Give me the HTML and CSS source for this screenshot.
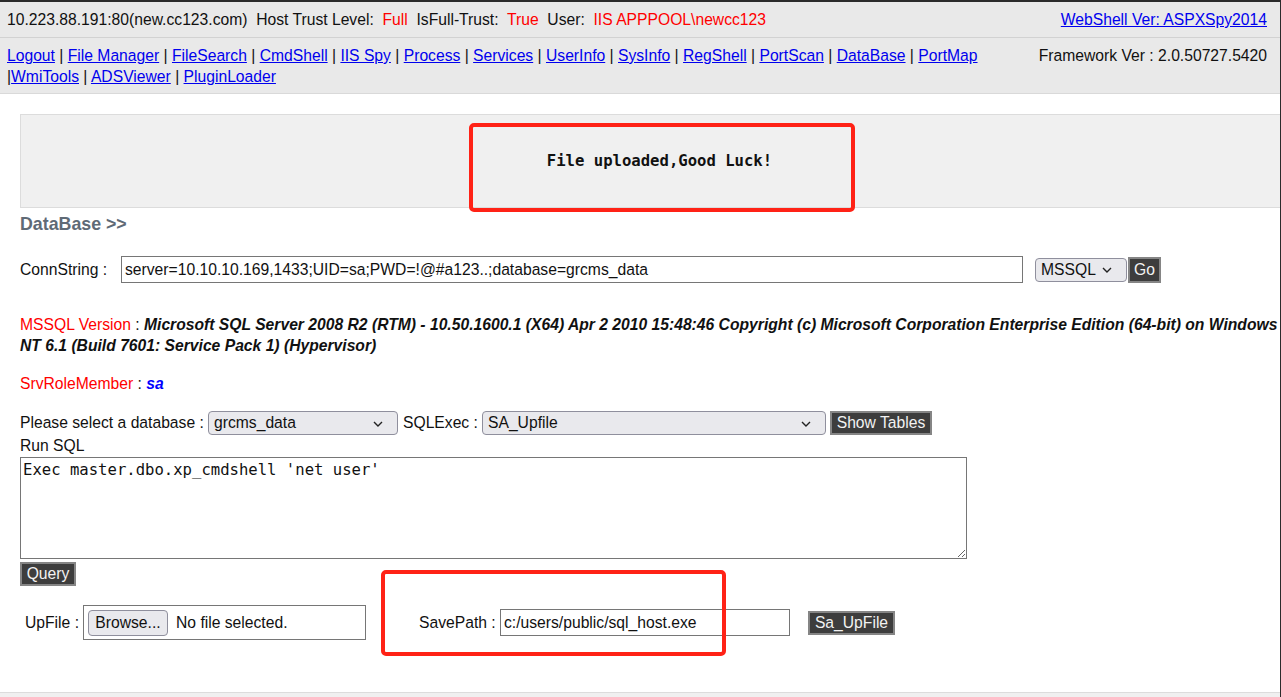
FILE: index.html
```html
<!DOCTYPE html>
<html>
<head>
<meta charset="utf-8">
<link rel="stylesheet" href="styles.css">
</head>
<body>
<div class="page">
  <div class="top">
    <div class="info">10.223.88.191:80(new.cc123.com)&nbsp; Host Trust Level:&nbsp; <span class="red">Full</span>&nbsp; IsFull-Trust:&nbsp; <span class="red">True</span>&nbsp; User:&nbsp; <span class="red">IIS APPPOOL\newcc123</span></div>
    <a class="link" href="#">WebShell Ver: ASPXSpy2014</a>
  </div>
  <div class="nav">
    <div class="nav-links"><a class="link" href="#">Logout</a> | <a class="link" href="#">File Manager</a> | <a class="link" href="#">FileSearch</a> | <a class="link" href="#">CmdShell</a> | <a class="link" href="#">IIS Spy</a> | <a class="link" href="#">Process</a> | <a class="link" href="#">Services</a> | <a class="link" href="#">UserInfo</a> | <a class="link" href="#">SysInfo</a> | <a class="link" href="#">RegShell</a> | <a class="link" href="#">PortScan</a> | <a class="link" href="#">DataBase</a> | <a class="link" href="#">PortMap</a> |<a class="link" href="#">WmiTools</a> | <a class="link" href="#">ADSViewer</a> | <a class="link" href="#">PluginLoader</a></div>
    <div class="fw">Framework Ver : 2.0.50727.5420</div>
  </div>

  <div class="content">
    <div class="msg">File uploaded,Good Luck!</div>
    <div class="dbtitle">DataBase &gt;&gt;</div>

    <div class="conn">
      <span class="conn-label">ConnString :</span>
      <div class="textbox conn-input">server=10.10.10.169,1433;UID=sa;PWD=!@#a123..;database=grcms_data</div>
      <div class="select sel-type"><span>MSSQL</span><svg class="chev" width="10" height="6" viewBox="0 0 10 6"><path d="M1 1 L5 5 L9 1" fill="none" stroke="#222" stroke-width="1.4"/></svg></div>
      <div class="btn btn-go">Go</div>
    </div>

    <div class="version"><span class="red">MSSQL Version</span> : <b><i>Microsoft SQL Server 2008 R2 (RTM) - 10.50.1600.1 (X64) Apr 2 2010 15:48:46 Copyright (c) Microsoft Corporation Enterprise Edition (64-bit) on Windows NT 6.1 (Build 7601: Service Pack 1) (Hypervisor)</i></b></div>

    <div class="role"><span class="red">SrvRoleMember</span> : <b><i class="blue">sa</i></b></div>

    <div class="selrow">
      <span class="lbl-db">Please select a database :</span>
      <div class="select sel-db"><span>grcms_data</span><svg class="chev" width="10" height="6" viewBox="0 0 10 6"><path d="M1 1 L5 5 L9 1" fill="none" stroke="#222" stroke-width="1.4"/></svg></div>
      <span class="lbl-exec">SQLExec :</span>
      <div class="select sel-exec"><span>SA_Upfile</span><svg class="chev" width="10" height="6" viewBox="0 0 10 6"><path d="M1 1 L5 5 L9 1" fill="none" stroke="#222" stroke-width="1.4"/></svg></div>
      <div class="btn btn-show">Show Tables</div>
    </div>

    <div class="runsql">Run SQL</div>
    <textarea class="sql">Exec master.dbo.xp_cmdshell 'net user'</textarea>
    <div class="btn btn-query">Query</div>

    <div class="uprow">
      <span class="lbl-up">UpFile :</span>
      <div class="filebox"><span class="browse">Browse...</span><span class="nofile">No file selected.</span></div>
      <span class="lbl-save">SavePath :</span>
      <div class="textbox save-input">c:/users/public/sql_host.exe</div>
      <div class="btn btn-up">Sa_UpFile</div>
    </div>
  </div>
  <div class="footer"></div>

  <div class="mark mark-1"></div>
  <div class="mark mark-2"></div>
</div>
</body>
</html>
```

FILE: styles.css
```css
html, body {
  margin: 0;
  padding: 0;
  background: #fff;
}
body {
  font-family: "Liberation Sans", Arial, sans-serif;
  font-size: 15.68px;
  color: #111;
}
.page {
  position: relative;
  height: 695px;
  overflow: hidden;
  border-top: 2px solid #2b2b2b;
  border-right: 1px solid #2b2b2b;
  display: flex;
  flex-direction: column;
}
.red { color: #f00; }
.blue { color: #00f; }
.link { color: #00e; text-decoration: underline; }

.top {
  display: flex;
  justify-content: space-between;
  height: 35px;
  line-height: 35px;
  padding: 0 13px 0 7px;
  background: #e9e9e9;
  border-bottom: 1px solid #d2d2d2;
}
.nav {
  display: flex;
  padding: 7px 13px 6px 7px;
  line-height: 21px;
  background: #e9e9e9;
  border-bottom: 1px solid #d9d9d9;
}
.nav-links { flex: 1; }
.fw { white-space: nowrap; padding-left: 10px; }

.content {
  padding: 20px 0 0 20px;
}
.msg {
  height: 92px;
  background: #f0f0f0;
  border: 1px solid #dcdcdc;
  border-right: none;
  display: flex;
  align-items: center;
  justify-content: center;
  padding-left: 18px;
  font-family: "DejaVu Sans Mono", monospace;
  font-weight: bold;
  font-size: 15.6px;
  color: #111;
}
.dbtitle {
  margin-top: 4px;
  line-height: 24px;
  font-size: 17.8px;
  font-weight: bold;
  color: #5f6a76;
}

.conn {
  margin-top: 20px;
  display: flex;
  align-items: center;
  height: 27px;
}
.conn-label { width: 101px; }
.textbox {
  box-sizing: border-box;
  border: 1px solid #767676;
  background: #fff;
  padding: 0 3px;
  display: flex;
  align-items: center;
  white-space: nowrap;
  overflow: hidden;
}
.conn-input { width: 902px; height: 27px; }
.select {
  box-sizing: border-box;
  display: flex;
  align-items: center;
  justify-content: space-between;
  height: 24px;
  padding: 0 14px 0 5px;
  background: #e9e9ed;
  border: 1px solid #8f8f9d;
  border-radius: 4px;
  white-space: nowrap;
}
.chev { flex: none; margin-top: 1px; }
.sel-type { width: 92px; margin-left: 12px; }
.btn {
  box-sizing: border-box;
  display: flex;
  align-items: center;
  justify-content: center;
  background: #3d3d3d;
  color: #f2f2f2;
  border: 2px solid #858585;
  white-space: nowrap;
}
.btn-go { width: 33px; height: 26px; margin-left: 1px; }

.version {
  margin-top: 31px;
  line-height: 21px;
  padding-right: 2px;
}
.role {
  margin-top: 17px;
  line-height: 21px;
}

.selrow {
  margin-top: 17px;
  display: flex;
  align-items: center;
  height: 24px;
}
.lbl-db { width: 188px; }
.sel-db { width: 190px; }
.lbl-exec { margin-left: 5px; width: 79px; }
.sel-exec { width: 344px; }
.btn-show { width: 102px; height: 24px; margin-left: 4px; }

.runsql { line-height: 21px; }
.sql {
  display: block;
  box-sizing: border-box;
  margin: 1px 0 0 0;
  width: 947px;
  height: 102px;
  border: 1px solid #767676;
  padding: 2px 2px;
  font-family: "DejaVu Sans Mono", monospace;
  font-size: 15.6px;
  line-height: 20px;
  color: #111;
  resize: both;
}
.btn-query { width: 56px; height: 24px; margin-top: 3px; }

.uprow {
  margin-top: 19px;
  display: flex;
  align-items: center;
  height: 35px;
  padding-left: 5px;
}
.lbl-up { width: 58px; }
.filebox {
  box-sizing: border-box;
  width: 283px;
  height: 35px;
  border: 1px solid #767676;
  display: flex;
  align-items: center;
  padding-left: 4px;
}
.browse {
  box-sizing: border-box;
  width: 80px;
  height: 26px;
  display: flex;
  align-items: center;
  justify-content: center;
  background: #e9e9ed;
  border: 1px solid #8f8f9d;
  border-radius: 4px;
}
.nofile { margin-left: 8px; }
.lbl-save { margin-left: 53px; width: 81px; }
.save-input { width: 290px; height: 27px; }
.btn-up { width: 87px; height: 24px; margin-left: 18px; }

.footer {
  margin-top: 52px;
  flex: 1;
  background: #f0f0f0;
  border-top: 1px solid #dcdcdc;
}

.mark {
  position: absolute;
  box-sizing: border-box;
  border: 4px solid #ff2216;
  border-radius: 5px;
}
.mark-1 { left: 469px; top: 121px; width: 386px; height: 89px; }
.mark-2 { left: 381px; top: 568px; width: 345px; height: 86px; }
```
